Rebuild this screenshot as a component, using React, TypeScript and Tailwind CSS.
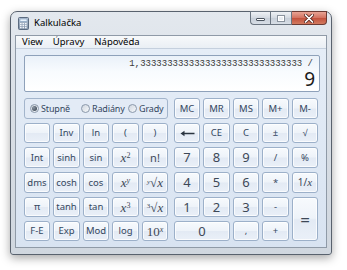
import React from "react";

type BP = { children?: React.ReactNode; className?: string };

const Btn = ({ children, className = "" }: BP) => (
  <div
    className={`flex items-center justify-center rounded-[3px] border border-[#9cb0c9] bg-[linear-gradient(to_bottom,#f7fafd_0%,#eef3f9_48%,#e3eaf4_52%,#eaf0f8_100%)] shadow-[inset_0_0_0_1px_rgba(255,255,255,0.75)] text-[#34475f] leading-none ${className}`}
  >
    {children}
  </div>
);

const Sans = ({ children }: BP) => <span className="text-[9.5px]">{children}</span>;
const Dig = ({ children }: BP) => <span className="text-[13px] text-[#3d4857]">{children}</span>;
const Ser = ({ children }: BP) => (
  <span className="font-['Liberation_Serif',serif] italic text-[13px] text-[#3d4857]">{children}</span>
);

const Radio = ({ checked, label, className = "" }: { checked?: boolean; label: string; className?: string }) => (
  <div className={`flex items-center gap-[2px] ${className}`}>
    <div className="w-[9px] h-[9px] rounded-full border border-[#8a98aa] bg-[linear-gradient(135deg,#cfd6df,#f7f9fb)] flex items-center justify-center shrink-0">
      {checked && <div className="w-[5px] h-[5px] rounded-full bg-[radial-gradient(circle_at_35%_35%,#8b96a3,#2f3a47)]" />}
    </div>
    <span className="text-[9px] tracking-[-0.15px] text-[#34475f] whitespace-nowrap">{label}</span>
  </div>
);

const CalcIcon = () => (
  <svg width="11" height="13" viewBox="0 0 11 13">
    <defs>
      <linearGradient id="ci" x1="0" y1="0" x2="0" y2="1">
        <stop offset="0" stopColor="#b9c6d6" />
        <stop offset="1" stopColor="#7f90a6" />
      </linearGradient>
    </defs>
    <rect x="0.5" y="0.5" width="10" height="12" rx="1" fill="url(#ci)" stroke="#5b6b80" />
    <rect x="2" y="2" width="7" height="2.5" fill="#e9f2fb" stroke="#6f8fb4" strokeWidth="0.5" />
    {[0, 1, 2].map((r) =>
      [0, 1, 2].map((c) => (
        <rect key={`${r}${c}`} x={2 + c * 2.5} y={6 + r * 2} width="1.6" height="1.3" fill="#f3f6fa" />
      ))
    )}
  </svg>
);

export default function App() {
  const small = "1," + "3".repeat(30) + " /";
  return (
    <div className="w-[347px] h-[270px] bg-white pt-[11px] pl-[10px] font-['Noto_Sans',sans-serif] overflow-hidden">
      {/* window */}
      <div className="w-[322px] h-[244px] rounded-t-[7px] rounded-b-[3px] border border-[#59626e] bg-[linear-gradient(to_bottom,#e3e8ee_0%,#d9dfe6_40%,#d0d7df_100%)] shadow-[0_3px_10px_rgba(0,0,0,0.35)] flex flex-col">
        {/* title bar */}
        <div className="h-[23px] flex items-start relative">
          <div className="flex items-center mt-[4px] ml-[7px] gap-[5px]">
            <CalcIcon />
            <span className="text-[9.5px] text-black">Kalkulačka</span>
          </div>
          <div className="ml-auto mr-[4px] -mt-[1px] flex h-[14px]">
            <div className="w-[20px] h-full border border-[#6b7581] border-r-0 rounded-bl-[4px] bg-[linear-gradient(to_bottom,#eef1f5,#d3d9e1_50%,#c6ced8_50%,#d8dee6)] flex items-end justify-center pb-[3px]">
              <div className="w-[9px] h-[3px] bg-white border border-[#4c5560] rounded-[1px]" />
            </div>
            <div className="w-[22px] h-full border border-[#6b7581] bg-[linear-gradient(to_bottom,#eef1f5,#d3d9e1_50%,#c6ced8_50%,#d8dee6)] flex items-center justify-center">
              <div className="w-[8px] h-[7px] border border-[#8a939e] bg-[#e9edf2] shadow-[inset_0_0_0_1px_#ffffff]" />
            </div>
            <div className="w-[35px] h-full border border-[#6b3a33] border-l-0 rounded-br-[4px] bg-[linear-gradient(to_bottom,#e8a495,#d2705e_50%,#c2503c_50%,#d27a5f)] flex items-center justify-center">
              <svg width="10" height="9" viewBox="0 0 10 9">
                <path d="M1.5 1 L8.5 8 M8.5 1 L1.5 8" stroke="#5a2a22" strokeWidth="3.2" strokeLinecap="round" />
                <path d="M1.5 1 L8.5 8 M8.5 1 L1.5 8" stroke="#ffffff" strokeWidth="1.7" strokeLinecap="round" />
              </svg>
            </div>
          </div>
        </div>
        {/* client */}
        <div className="mx-[4px] mb-[6px] flex-1 border border-[#8f9aa7] flex flex-col bg-[#dfe8f4]">
          {/* menu */}
          <div className="h-[13px] flex items-center pl-[1px] bg-[linear-gradient(to_bottom,#f7f9fb,#eaeff5)] border-b border-[#c5d0de] text-[9.5px] text-black">
            <span className="px-[5px]">View</span>
            <span className="px-[5px]">Úpravy</span>
            <span className="px-[5px]">Nápověda</span>
          </div>
          {/* body */}
          <div className="flex-1 pl-[8px] pr-[6px] pt-[6px] flex flex-col gap-[6px] bg-[linear-gradient(to_bottom,#e5edf7,#d8e3f1)]">
            {/* display */}
            <div className="h-[37px] rounded-[2px] border border-[#8ea1ba] bg-[linear-gradient(to_bottom,#eaf1f9_0%,#f8fbfe_45%,#ffffff_100%)] flex flex-col items-end pr-[4px] pt-[2px]">
              <div className="font-['Liberation_Mono',monospace] text-[9px] leading-[12px] text-[#3a3a3a] pr-[2px] whitespace-pre">{small}</div>
              <div className="text-[19px] leading-[20px] text-[#1b1b1b] -mt-[1px]">9</div>
            </div>
            {/* keys */}
            <div className="flex gap-[6px]">
              <div className="grid grid-cols-[26px_27px_26px_27px_26px] grid-rows-[21px_20px_21px_21px_20px_20px] gap-x-[3px] gap-y-[4px]">
                <div className="col-span-5 rounded-[3px] border border-[#a3b5cc] flex items-center pl-[5px] bg-[#e3ebf6] overflow-hidden">
                  <Radio checked label="Stupně" className="w-[51px]" />
                  <Radio label="Radiány" className="w-[47px]" />
                  <Radio label="Grady" />
                </div>
                <Btn />
                <Btn><Sans>Inv</Sans></Btn>
                <Btn><Sans>ln</Sans></Btn>
                <Btn><Sans>(</Sans></Btn>
                <Btn><Sans>)</Sans></Btn>

                <Btn><Sans>Int</Sans></Btn>
                <Btn><Sans>sinh</Sans></Btn>
                <Btn><Sans>sin</Sans></Btn>
                <Btn><Ser>x<sup className="text-[8px] not-italic">2</sup></Ser></Btn>
                <Btn><span className="text-[11px] text-[#3d4857]">n!</span></Btn>

                <Btn><Sans>dms</Sans></Btn>
                <Btn><Sans>cosh</Sans></Btn>
                <Btn><Sans>cos</Sans></Btn>
                <Btn><Ser>x<sup className="text-[8px]">y</sup></Ser></Btn>
                <Btn><Ser><sup className="text-[7px]">y</sup><span className="not-italic">√</span>x</Ser></Btn>

                <Btn><Sans>π</Sans></Btn>
                <Btn><Sans>tanh</Sans></Btn>
                <Btn><Sans>tan</Sans></Btn>
                <Btn><Ser>x<sup className="text-[8px] not-italic">3</sup></Ser></Btn>
                <Btn><Ser><sup className="text-[7px] not-italic">3</sup><span className="not-italic">√</span>x</Ser></Btn>

                <Btn><Sans>F-E</Sans></Btn>
                <Btn><Sans>Exp</Sans></Btn>
                <Btn><Sans>Mod</Sans></Btn>
                <Btn><Sans>log</Sans></Btn>
                <Btn><span className="font-['Liberation_Serif',serif] text-[13px] text-[#3d4857]">10<sup className="text-[8px] italic">x</sup></span></Btn>
              </div>
              <div className="grid grid-cols-[26px_27px_26px_27px_26px] grid-rows-[21px_20px_21px_21px_20px_20px] gap-x-[3px] gap-y-[4px]">
                <Btn><Sans>MC</Sans></Btn>
                <Btn><Sans>MR</Sans></Btn>
                <Btn><Sans>MS</Sans></Btn>
                <Btn><Sans>M+</Sans></Btn>
                <Btn><Sans>M-</Sans></Btn>

                <Btn>
                  <svg width="15" height="7" viewBox="0 0 15 7">
                    <path d="M14.5 3.5 H3" stroke="#2a3440" strokeWidth="1.5" />
                    <path d="M0.5 3.5 L4.5 0.7 L4.5 6.3 Z" fill="#2a3440" />
                  </svg>
                </Btn>
                <Btn><Sans>CE</Sans></Btn>
                <Btn><Sans>C</Sans></Btn>
                <Btn><Sans>±</Sans></Btn>
                <Btn><Sans>√</Sans></Btn>

                <Btn><Dig>7</Dig></Btn>
                <Btn><Dig>8</Dig></Btn>
                <Btn><Dig>9</Dig></Btn>
                <Btn><Sans>/</Sans></Btn>
                <Btn><Sans>%</Sans></Btn>

                <Btn><Dig>4</Dig></Btn>
                <Btn><Dig>5</Dig></Btn>
                <Btn><Dig>6</Dig></Btn>
                <Btn><Sans>*</Sans></Btn>
                <Btn><span className="text-[10px] text-[#3d4857]">1/<span className="font-['Liberation_Serif',serif] italic text-[11px]">x</span></span></Btn>

                <Btn><Dig>1</Dig></Btn>
                <Btn><Dig>2</Dig></Btn>
                <Btn><Dig>3</Dig></Btn>
                <Btn><Sans>-</Sans></Btn>
                <Btn className="row-span-2"><span className="text-[17px] text-[#3d4857]">=</span></Btn>

                <Btn className="col-span-2"><Dig>0</Dig></Btn>
                <Btn><Sans>,</Sans></Btn>
                <Btn><Sans>+</Sans></Btn>
              </div>
            </div>
          </div>
        </div>
      </div>
    </div>
  );
}
